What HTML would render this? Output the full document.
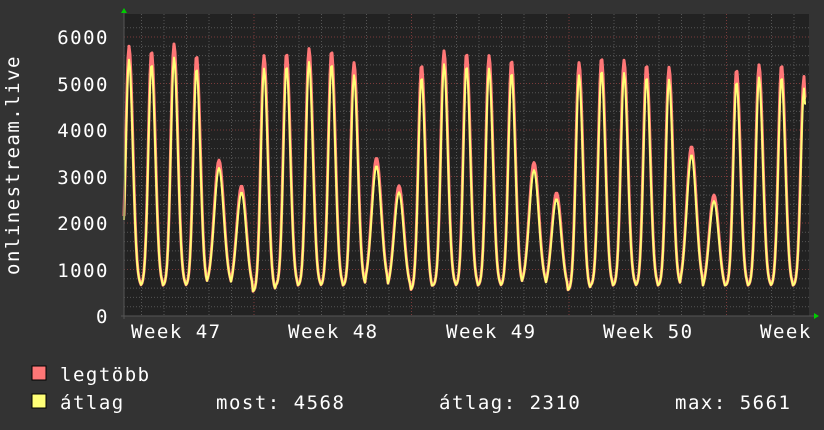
<!DOCTYPE html><html><head><meta charset="utf-8"><style>
body{margin:0;background:#333;width:824px;height:430px;overflow:hidden;font-family:"DejaVu Sans Mono","Liberation Mono",monospace;color:#fff}
</style></head><body>
<svg id="s" width="824" height="430" xmlns="http://www.w3.org/2000/svg" style="position:absolute;left:0;top:0;font-family:'DejaVu Sans Mono','Liberation Mono',monospace">
<rect x="0" y="0" width="824" height="430" fill="#333"/>
<rect x="124" y="14" width="685" height="302" fill="#222"/>
<g id="grid"></g>
<g id="data"></g>
<line x1="121" y1="316" x2="815" y2="316" stroke="#555" stroke-width="1"/>
<line x1="124" y1="10" x2="124" y2="319" stroke="#555" stroke-width="1"/>
<polygon points="121,13 127,13 124,8" fill="#0c0"/>
<polygon points="814,313 814,319 819,316" fill="#0c0"/>
<g fill="#fff" font-size="19" text-anchor="end" letter-spacing="1.5">
<text x="109" y="44">6000</text><text x="109" y="91">5000</text><text x="109" y="137">4000</text><text x="109" y="184">3000</text><text x="109" y="230">2000</text><text x="109" y="277">1000</text><text x="109" y="323">0</text>
</g>
<g fill="#fff" font-size="19" letter-spacing="1.5">
<text x="131" y="338">Week 47</text><text x="288" y="338">Week 48</text><text x="446" y="338">Week 49</text><text x="603" y="338">Week 50</text><text x="760" y="338">Week</text>
</g>
<text transform="translate(19,165) rotate(-90)" fill="#fff" font-size="19" text-anchor="middle" letter-spacing="1.5">onlinestream.live</text>
<rect x="32" y="366" width="14" height="14" fill="#f77" stroke="#000" stroke-width="1"/>
<rect x="32" y="394" width="14" height="14" fill="#ff7" stroke="#000" stroke-width="1"/>
<g fill="#fff" font-size="19" letter-spacing="1.5">
<text x="60" y="381">legtöbb</text>
<text x="60" y="409">átlag</text>
<text x="216" y="409">most: 4568</text>
<text x="439" y="409">átlag: 2310</text>
<text x="675" y="409">max: 5661</text>
</g>
</svg>
<script>
var g=document.getElementById('grid'),d=document.getElementById('data'),h='';
function Y(v){return 316-v*0.0465;}
for(var v=200;v<=6200;v+=200){var y=Y(v);if(y<14)break;var maj=v%1000==0;h+='<line x1="124" x2="809" y1="'+y+'" y2="'+y+'" stroke="'+(maj?'#7a3a3a':'#555')+'" stroke-dasharray="1,2"/>';}
for(var x=141.5;x<809;x+=22.5){var m=Math.abs(((x-254)/157.5)-Math.round((x-254)/157.5))<0.01;h+='<line y1="14" y2="316" x1="'+x+'" x2="'+x+'" stroke="'+(m?'#7a3a3a':'#555')+'" stroke-dasharray="1,2"/>';}
g.innerHTML=h;
var peaks=[5800,5700,5850,5600,3350,2800,5600,5650,5750,5700,5450,3400,2800,5400,5700,5650,5600,5500,3300,2650,5450,5550,5500,5400,5350,3650,2600,5300,5400,5400,5150];
var tr=[650,650,650,650,650,550,520,650,650,650,650,650,550,550,650,650,650,650,650,550,550,650,650,650,650,600,520,650,650,650,650];
var pr='',py='';
for(var x=124;x<=806;x+=1){
 var t=(x-129)/22.5,i=Math.round(t),ph=t-i;if(i<0)i=0;if(i>30)i=30;
 var f=Math.exp(-Math.pow(ph/0.2,2));if(ph>0)f=Math.exp(-Math.pow(ph/0.24,2));
 if(peaks[i]<4000)f=Math.exp(-Math.pow(ph/0.3,2));
 var r=tr[i]+(peaks[i]-tr[i])*f;var a=tr[i]+(peaks[i]*0.95-tr[i])*f;
 if(x>=805){a=4568;r=4700;}
 pr+=x+','+Y(r).toFixed(1)+' ';py+=x+','+Y(a).toFixed(1)+' ';
}
d.innerHTML='<polyline points="'+pr+'" fill="none" stroke="#f77" stroke-width="3" stroke-linejoin="round"/><polyline points="'+py+'" fill="none" stroke="#ff7" stroke-width="2" stroke-linejoin="round"/>';
</script>
</body></html>
